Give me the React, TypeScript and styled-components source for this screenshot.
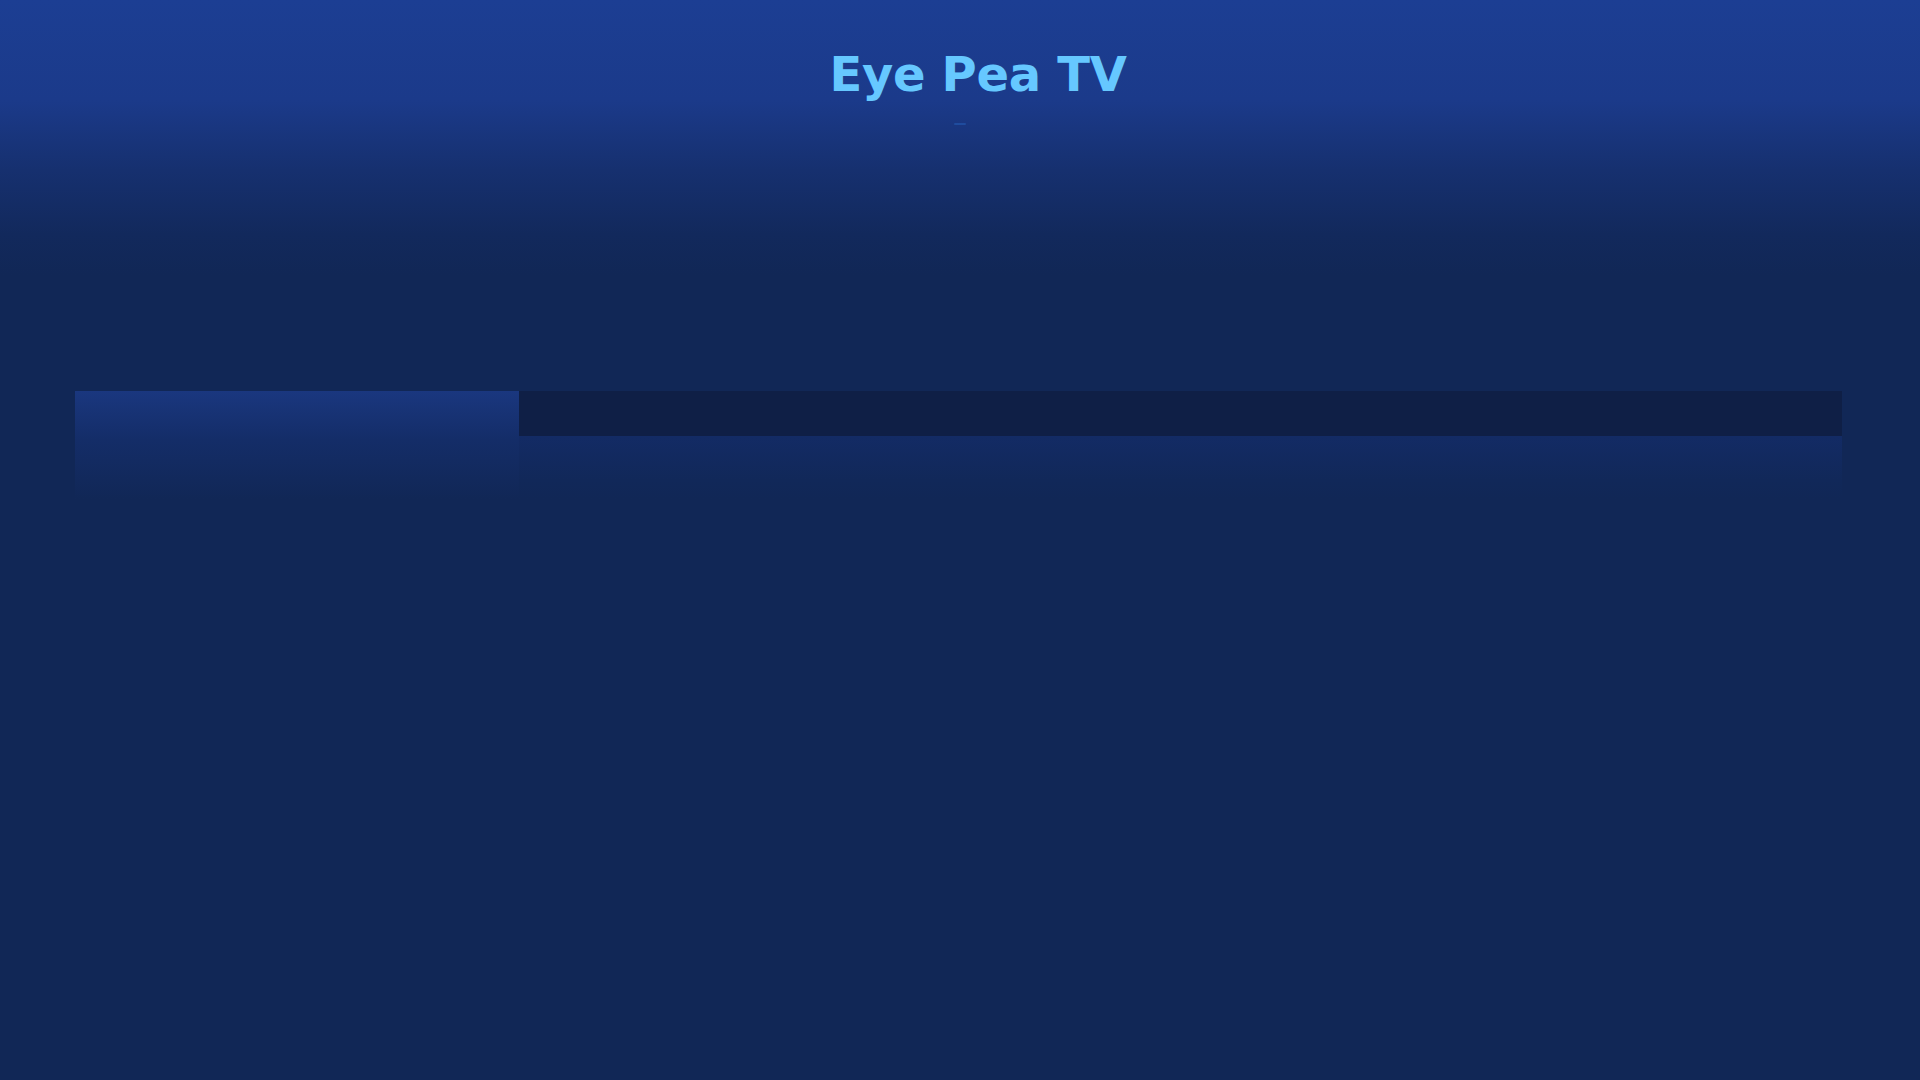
import React from "react";
import styled, { createGlobalStyle } from "styled-components";

const GlobalStyle = createGlobalStyle`
  html, body {
    margin: 0;
    padding: 0;
  }
  body {
    min-height: 1080px;
    background: #112756;
    font-family: "DejaVu Sans", "Liberation Sans", sans-serif;
  }
`;

const Page = styled.div`
  min-height: 1080px;
  background: linear-gradient(
    180deg,
    #1c3e93 0px,
    #1b3a8a 100px,
    #16306f 170px,
    #12295c 235px,
    #112756 275px,
    #112756 100%
  );
  display: flex;
  flex-direction: column;
`;

const Header = styled.header`
  display: flex;
  flex-direction: column;
  align-items: center;
  padding-top: 46px;
`;

const TitleRow = styled.div`
  display: flex;
  align-items: center;
`;

const LogoSlot = styled.span`
  display: inline-block;
  width: 28px;
  height: 28px;
  margin-right: 8px;
`;

const Title = styled.h1`
  margin: 0;
  font-family: "DejaVu Sans", "Verdana", sans-serif;
  font-weight: 700;
  font-size: 48px;
  line-height: 56px;
  color: #66c8ff;
  letter-spacing: -0.3px;
`;

const Tagline = styled.div`
  margin-top: 21px;
  width: 12px;
  height: 2px;
  border-radius: 2px;
  background: #1f4c9e;
`;

const Main = styled.main`
  padding: 0 78px 0 75px;
  margin-top: 266px;
`;

const Panel = styled.section`
  display: grid;
  grid-template-columns: 444px 1fr;
  height: 108px;
`;

const Sidebar = styled.aside`
  background: linear-gradient(180deg, #1a377f 0%, #142d68 45%, #112756 100%);
`;

const Content = styled.div`
  display: flex;
  flex-direction: column;
`;

const TabBar = styled.div`
  height: 45px;
  background: #0f1f46;
`;

const ContentBody = styled.div`
  flex: 1;
  background: linear-gradient(180deg, #132b65 0%, #112859 70%, #112756 100%);
`;

export default function App() {
  return (
    <>
      <GlobalStyle />
      <Page>
        <Header>
          <TitleRow>
            <LogoSlot />
            <Title>Eye Pea TV</Title>
          </TitleRow>
          <Tagline />
        </Header>
        <Main>
          <Panel>
            <Sidebar />
            <Content>
              <TabBar />
              <ContentBody />
            </Content>
          </Panel>
        </Main>
      </Page>
    </>
  );
}
